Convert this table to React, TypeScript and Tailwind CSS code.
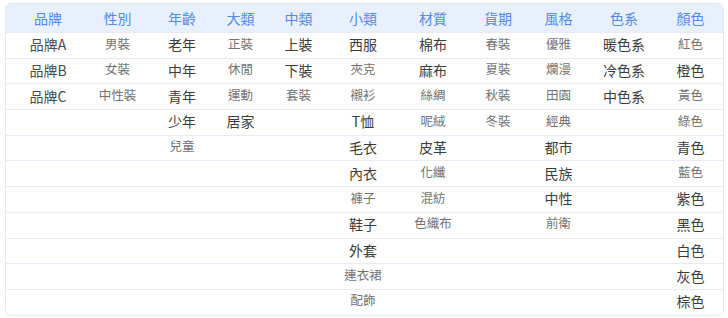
import React from 'react';

type Cell = [string, boolean] | null;

const headers = ['品牌', '性別', '年齡', '大類', '中類', '小類', '材質', '貨期', '風格', '色系', '顏色'];

// true = darker / larger text
const columns: [string, boolean][][] = [
  [['品牌A', true], ['品牌B', true], ['品牌C', true]],
  [['男裝', false], ['女裝', false], ['中性裝', false]],
  [['老年', true], ['中年', true], ['青年', true], ['少年', true], ['兒童', false]],
  [['正裝', false], ['休閒', false], ['運動', false], ['居家', true]],
  [['上裝', true], ['下裝', true], ['套裝', false]],
  [
    ['西服', true], ['夾克', false], ['襯衫', false], ['T恤', true], ['毛衣', true], ['內衣', true],
    ['褲子', false], ['鞋子', true], ['外套', true], ['連衣裙', false], ['配飾', false],
  ],
  [['棉布', true], ['麻布', true], ['絲綢', false], ['呢絨', false], ['皮革', true], ['化纖', false], ['混紡', false], ['色織布', false]],
  [['春裝', false], ['夏裝', false], ['秋裝', false], ['冬裝', false]],
  [['優雅', false], ['爛漫', false], ['田園', false], ['經典', false], ['都市', true], ['民族', true], ['中性', true], ['前衛', false]],
  [['暖色系', true], ['冷色系', true], ['中色系', true]],
  [
    ['紅色', false], ['橙色', true], ['黃色', false], ['綠色', false], ['青色', true], ['藍色', false],
    ['紫色', true], ['黑色', true], ['白色', true], ['灰色', true], ['棕色', true],
  ],
];

const rowCount = 11;

const getCell = (col: number, row: number): Cell => {
  const item = columns[col][row];
  return item ? item : null;
};

const App: React.FC = () => {
  return (
    <div
      className="w-[728px] h-[318px] bg-white pt-[3px] pl-[5px]"
      style={{ fontFamily: '"Noto Sans CJK TC", "Noto Sans", sans-serif' }}
    >
      <div className="w-[719px] border border-[#e3e8f2] rounded-[6px] overflow-hidden">
        <div className="grid grid-cols-[78px_67px_62px_55px_61px_68px_72px_58px_63px_68px_65px] h-[28px] bg-[#e8f0fd] items-center">
          {headers.map((h, c) => (
            <div
              key={h}
              className={
                c === 0
                  ? 'text-center text-[14px] text-[#5389e7] leading-none pl-[6px]'
                  : 'text-center text-[14px] text-[#5389e7] leading-none'
              }
            >
              {h}
            </div>
          ))}
        </div>
        {Array.from({ length: rowCount }).map((_, r) => (
          <div
            key={r}
            className="grid grid-cols-[78px_67px_62px_55px_61px_68px_72px_58px_63px_68px_65px] h-[25.7px] items-center border-t border-[#e8ebf5]"
          >
            {headers.map((_h, c) => {
              const cell = getCell(c, r);
              if (!cell) return <div key={c} />;
              if (c === 0) {
                return (
                  <div key={c} className="text-center text-[14px] text-[#4a4a4a] leading-none -mt-[2px] pl-[6px]">
                    {cell[0]}
                  </div>
                );
              }
              return (
                <div
                  key={c}
                  className={
                    cell[1]
                      ? 'text-center text-[14px] text-[#3c3c3c] leading-none -mt-[2px]'
                      : 'text-center text-[12.5px] text-[#727272] leading-none -mt-[3px]'
                  }
                >
                  {cell[0]}
                </div>
              );
            })}
          </div>
        ))}
      </div>
    </div>
  );
};

export default App;
